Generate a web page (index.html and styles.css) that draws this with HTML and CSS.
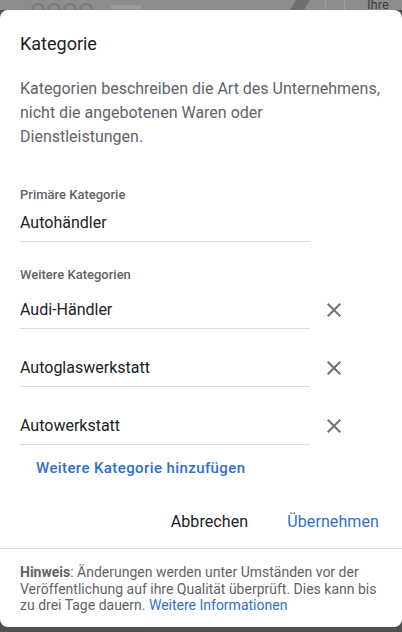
FILE: index.html
```html
<!DOCTYPE html>
<html lang="de">
<head>
    <meta charset="UTF-8">
    <meta name="viewport" content="width=device-width, initial-scale=1.0">
    <title>Kategorie</title>
    <link rel="stylesheet" href="styles.css">
</head>
<body>

    <!-- dimmed page behind the dialog -->
    <div class="page-strip">
        <span class="strip-ring"></span>
        <span class="strip-ring"></span>
        <span class="strip-ring"></span>
        <span class="strip-ring"></span>
        <span class="strip-bar"></span>
        <span class="strip-slash"></span>
        <span class="strip-sep"></span>
        <span class="strip-sep"></span>
        <span class="strip-text">Ihre</span>
    </div>

    <div class="dialog">
        <h1 class="dialog-title">Kategorie</h1>
        <p class="dialog-desc">Kategorien beschreiben die Art des Unternehmens, nicht die angebotenen Waren oder Dienstleistungen.</p>

        <div class="label label-primary">Primäre Kategorie</div>
        <div class="field-row">
            <div class="field">Autohändler</div>
        </div>

        <div class="label label-more">Weitere Kategorien</div>
        <div class="field-list">
            <div class="field-row">
                <div class="field">Audi-Händler</div>
                <button class="remove" aria-label="Entfernen">
                    <svg viewBox="0 0 24 24" width="24" height="24"><path d="M19 6.41L17.59 5 12 10.59 6.41 5 5 6.41 10.59 12 5 17.59 6.41 19 12 13.41 17.59 19 19 17.59 13.41 12z"/></svg>
                </button>
            </div>
            <div class="field-row">
                <div class="field">Autoglaswerkstatt</div>
                <button class="remove" aria-label="Entfernen">
                    <svg viewBox="0 0 24 24" width="24" height="24"><path d="M19 6.41L17.59 5 12 10.59 6.41 5 5 6.41 10.59 12 5 17.59 6.41 19 12 13.41 17.59 19 19 17.59 13.41 12z"/></svg>
                </button>
            </div>
            <div class="field-row">
                <div class="field">Autowerkstatt</div>
                <button class="remove" aria-label="Entfernen">
                    <svg viewBox="0 0 24 24" width="24" height="24"><path d="M19 6.41L17.59 5 12 10.59 6.41 5 5 6.41 10.59 12 5 17.59 6.41 19 12 13.41 17.59 19 19 17.59 13.41 12z"/></svg>
                </button>
            </div>
        </div>

        <button class="add-link">Weitere Kategorie hinzufügen</button>

        <div class="actions">
            <button class="btn btn-cancel">Abbrechen</button>
            <button class="btn btn-apply">Übernehmen</button>
        </div>

        <div class="dialog-footer">
            <b>Hinweis</b>: Änderungen werden unter Umständen vor der Veröffentlichung auf ihre Qualität überprüft. Dies kann bis zu drei Tage dauern. <a href="#" class="more-link">Weitere Informationen</a>
        </div>
    </div>

</body>
</html>
```

FILE: styles.css
```css
body {
    margin: 0;
    font-family: Roboto, "Liberation Sans", sans-serif;
    background-color: #505050;
    overflow: hidden;
}
.page-strip {
    height: 10px;
    overflow: hidden;
    display: flex;
    align-items: flex-start;
    padding-left: 31px;
    background-color: #8d8d8d;
}
.strip-ring {
    flex: none;
    width: 10px;
    height: 12px;
    margin: 3px 2px 0 0;
    border: 2px solid #7a7a7a;
    border-radius: 50%;
}
.strip-bar {
    width: 30px;
    height: 4px;
    margin: 5px 0 0 16px;
    background-color: #9a9a9a;
}
.strip-slash {
    width: 14px;
    height: 10px;
    margin-left: 152px;
    background-color: #6f6f6f;
    transform: skewX(-30deg);
}
.strip-sep {
    width: 1px;
    height: 10px;
    margin-left: 18px;
    background-color: #a0a0a0;
}
.strip-text {
    margin-left: 22px;
    font-size: 13px;
    line-height: 10px;
    color: #3d3d3d;
}
.dialog {
    height: 617px;
    box-sizing: border-box;
    background-color: #fff;
    border-radius: 8px;
    padding-top: 22px;
    display: flex;
    flex-direction: column;
}
.dialog-title {
    margin: 0 20px;
    font-size: 18px;
    line-height: 24px;
    font-weight: 400;
    color: #202124;
}
.dialog-desc {
    margin: 21px 20px 0;
    font-size: 16px;
    line-height: 24px;
    color: #5f6368;
}
.label {
    margin: 0 20px;
    font-size: 13px;
    line-height: 16px;
    font-weight: 500;
    color: #5f6368;
}
.label-primary {
    margin-top: 38px;
}
.label-more {
    margin-top: 25px;
}
.field-list {
    display: flex;
    flex-direction: column;
    gap: 27px;
    margin-top: 15px;
}
.label-primary + .field-row {
    margin-top: 8px;
}
.field-row {
    display: flex;
    align-items: flex-start;
    gap: 12px;
    padding-left: 20px;
}
.field {
    width: 290px;
    font-size: 16px;
    line-height: 24px;
    color: #202124;
    padding-bottom: 6px;
    border-bottom: 1px solid #dadce0;
}
.remove {
    padding: 0;
    border: none;
    background: none;
    width: 24px;
    height: 24px;
    fill: #6f7276;
    cursor: pointer;
}
.add-link {
    align-self: flex-start;
    margin: 13px 0 0 20px;
    padding: 0 16px;
    border: none;
    background: none;
    font-family: inherit;
    font-size: 15px;
    line-height: 20px;
    font-weight: 500;
    letter-spacing: 0.4px;
    color: #2f6fd0;
    cursor: pointer;
}
.actions {
    display: flex;
    justify-content: flex-end;
    gap: 23px;
    margin-top: 34px;
    padding: 0 15px 16px;
    border-bottom: 1px solid #dadce0;
}
.btn {
    padding: 0 8px;
    border: none;
    background: none;
    font-family: inherit;
    font-size: 16px;
    line-height: 20px;
    letter-spacing: 0.1px;
    cursor: pointer;
}
.btn-cancel {
    color: #202124;
}
.btn-apply {
    color: #2f6fd0;
}
.dialog-footer {
    padding: 15px 20px 0;
    font-size: 14px;
    line-height: 16.5px;
    color: #5f6368;
}
.dialog-footer b {
    font-weight: 700;
}
.more-link {
    color: #2f6fd0;
    text-decoration: none;
}
```
